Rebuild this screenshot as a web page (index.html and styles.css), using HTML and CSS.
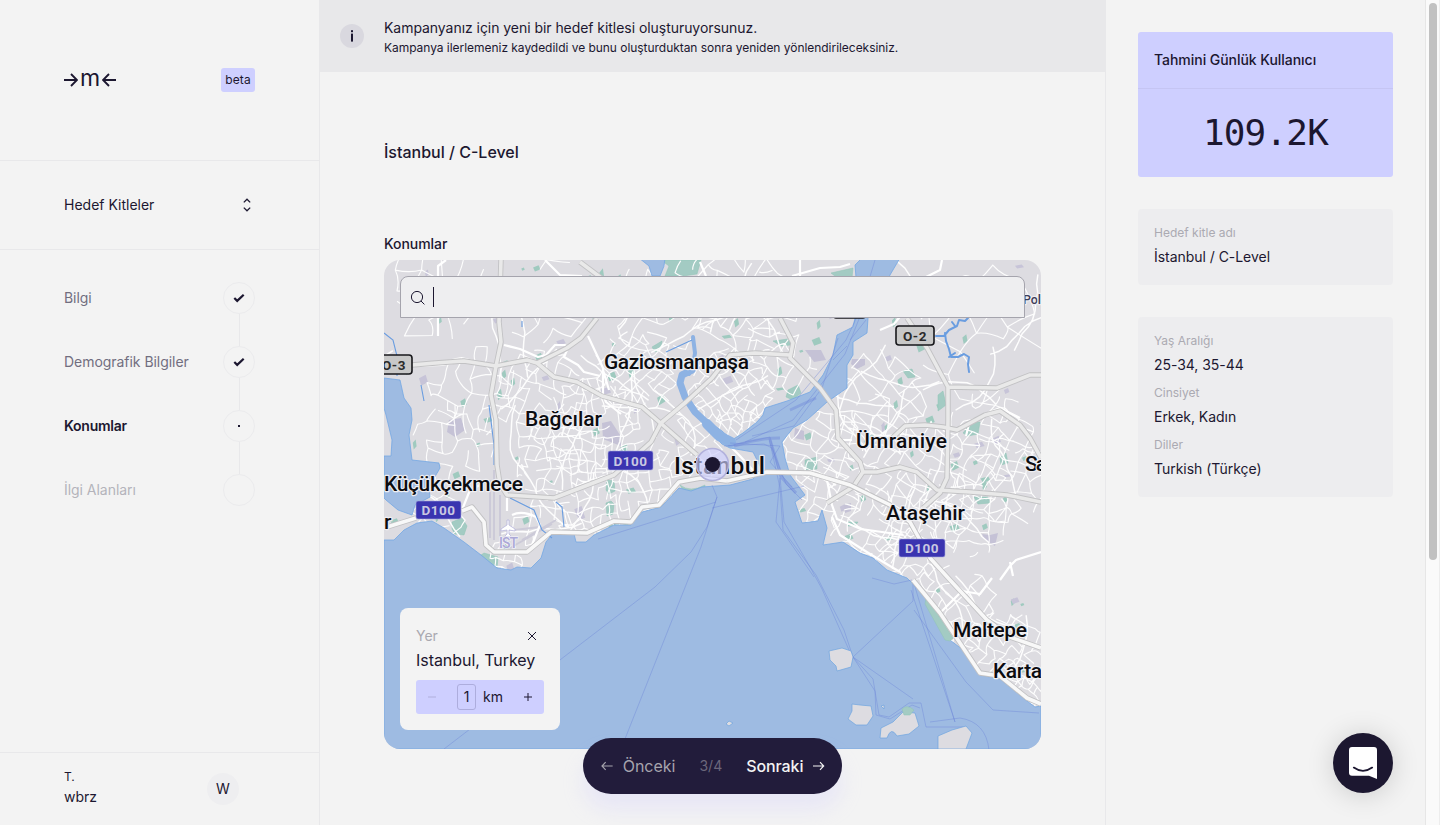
FILE: index.html
```html
<!DOCTYPE html>
<html lang="tr">
<head>
<meta charset="utf-8">
<title>Hedef Kitleler</title>
<link rel="stylesheet" href="styles.css">
</head>
<body>
<div class="app">
  <aside class="sidebar">
    <div class="brand">
      <div class="logo">
        <svg width="14" height="14" viewBox="0 0 14 14"><path d="M0 7H13M7 1l6 6-6 6"/></svg>
        <span>m</span>
        <svg width="14" height="14" viewBox="0 0 14 14"><path d="M14 7H1M7 1L1 7l6 6"/></svg>
      </div>
      <span class="beta">beta</span>
    </div>
    <div class="switcher">
      <span>Hedef Kitleler</span>
      <svg width="16" height="16" viewBox="0 0 16 16"><path d="M4.800 5.400L8 2.200l3.200 3.200M4.800 10.600L8 13.800l3.200-3.200"/></svg>
    </div>
    <ol class="steps">
      <li class="step done"><span>Bilgi</span><i><svg width="12" height="10" viewBox="0 0 12 10"><path d="M1.300 5l2.900 2.900L10.700 1.700"/></svg></i></li>
      <li class="step done"><span>Demografik Bilgiler</span><i><svg width="12" height="10" viewBox="0 0 12 10"><path d="M1.300 5l2.900 2.900L10.700 1.700"/></svg></i></li>
      <li class="step current"><span>Konumlar</span><i><b></b></i></li>
      <li class="step todo"><span>İlgi Alanları</span><i></i></li>
    </ol>
    <div class="user">
      <div class="user-name"><small>T.</small><span>wbrz</span></div>
      <span class="avatar">W</span>
    </div>
  </aside>

  <main class="content">
    <div class="notice">
      <span class="info"><svg width="6" height="14" viewBox="0 0 6 14"><rect x="2" y="1.200" width="2" height="2"/><rect x="2" y="4.600" width="2" height="8"/></svg></span>
      <div class="notice-text">
        <p>Kampanyanız için yeni bir hedef kitlesi oluşturuyorsunuz.</p>
        <small>Kampanya ilerlemeniz kaydedildi ve bunu oluşturduktan sonra yeniden yönlendirileceksiniz.</small>
      </div>
    </div>
    <div class="form">
      <h1>İstanbul / C-Level</h1>
      <h2>Konumlar</h2>
      <div class="map">
        <svg class="map-canvas" width="657" height="489" viewBox="384 260 657 489">
          <rect class="land" x="384" y="260" width="657" height="489"/>
          <g id="patches"></g>
          <g class="park">
            <path d="M661 260h40l-4 14-14 2h-18l4-10z"/>
            <path d="M452 522l10-4 5 8-3 9-9-1-3-5z"/>
            <path d="M607 480l7 1 1 10-6 3-3-4z"/><path d="M606 503l5-2 3 3-1 10-6 2z"/>
            <path d="M680 485q10 8 25 0v6q-12 6-22-1z"/>
            <path d="M478 557l6-4 14 4-1 12-10-5z"/>
            <path d="M652 347l10-6-1 8-6 3z"/>
            <path d="M788 390l10-5 3 8-8 7-7-3z"/><path d="M831 273l22-5-1 10-12 2z"/>
            <path d="M963 433l8-10 9-1-2 12-10 2z"/><path d="M1000 458l6-5 2 10-7 2z"/>
            <path d="M938 395l5-4 3 14-8 6z"/><path d="M974 497l14 0 2 6-12 1z"/>
            <path d="M773 341l15-2 3 6-10 1z"/><path d="M805 460l12-3 0 12-12 1z"/>
            <path d="M903 371l9-2 3 8-7 1z"/><path d="M848 522l10 0-3 4-7 0z"/>
          </g>
          <g class="built">
            <path d="M449 420l12-2 4 12-10 7-8-5z"/><path d="M602 423l9-2 9 14 1 11-18-7z"/>
            <path d="M852 359l13 0 0 6-8 4-6-5z"/><path d="M805 350l16 0 5 10-12 2z"/>
            <path d="M982 534l8 1 8-2-3 13-10-6z"/><path d="M844 505l7-2 0 8-6 2z"/>
            <path d="M795 428l9 3v9l-10-2z"/>
          </g>
          <g id="streets"></g>
          <g class="runway"><path d="M490 480v58M494 470v70M500 495v42M522 540l34-20M510 548l42-24M514 530l26-3"/></g>
          <g class="minor-road">
            <path d="M504 345l16 4 18 8 8-2 9-10h10l2 5-3 7 14 8 6 7 16 4"/>
            <path d="M588 336l15 32 0 26 3 8 15 12M603 370l6 20"/>
            <path d="M438 336v-70l8-6M545 260l15 15 22 1M800 260v16M792 276l28-8 20-1 10-3M942 260l-2 10-14 7"/>
            <path d="M700 262l6 14M880 330l14-6 8-10"/>
            <path d="M464 361l-22 4-25 1M462 510l8-20 12-6"/>
            <path d="M838 440h14M970 420l-4 16M990 412l10-4 20 10"/>
            <path d="M1000 580l10-14 6-6 25-8M1010 562l3 14"/>
            <path d="M507 495l0 16M512 515q10-5 24 2l4 8-8 20"/>
            <path d="M832 517l8 18 30 19 30 18M826 475l6 30 5 14 24 10 42 6M940 613l14-14 8-8 18 3 12-16M760 478l-20-22-28-28"/>
          </g>
          <g class="water">
            <path d="M384 378L400 380 404 398 411 408 412 420 409 435 412 460 439 463 440 468 429 487 430 497 415 505 412 515 398 510 386 500 384 498V456L391 456 392 440 386 415 384 408z"/>
            <path d="M384 540L394 540 404 530 417 523 432 521 444 528 464 542 481 555 497 568 511 570 517 567 531 568 541 558 546 542 554 532 574 534 576 542 586 542 594 535 614 525 631 525 642 512 661 507 679 488 691 491 702 487 730 485 753 479 762 470 753 452 730 448 722 444 708 430 712 424 722 431 732 440 743 433 757 422 763 415 765 408 787 401 810 392 823 375 833 355 837 335 853 327 855 318 857 290 855 265 862 258H900L890 275 880 295 868 318 867 333 853 342 853 355 847 365 847 388 827 402 807 420 793 428 782 442 785 458 790 475 805 495 795 502 802 523 818 521 822 510 827 528 823 545 843 542 860 553 873 558 887 570 907 578 913 584 927 600 950 640 963 650 980 675 1000 679 1027 701 1035 707 1041 706V749H384z"/>
            <path d="M639 258h26l-1 8-4 10h-8l-3-10z"/>
          </g>
          <g class="horn">
            <path stroke-width="4" d="M693 337l2 16-2 12-4 9"/>
            <path stroke-width="7" d="M692 370l-10 5-2 8 5 14 10 15 14 13"/>
            <path stroke-width="10" d="M707 424l12 12 12 6"/>
          </g>
          <g class="stream">
            <path d="M384 333l9 7 4 16v20M489 405l5 40 0 20M510 498l24 12 8 20 10 8M522 321v6M556 502l6 5 2 20M666 352l26-12M421 385l3 16"/>
            <path class="lake" d="M936 336l8 0 5-6 8-4 2-6 6 1 3-3M945 333l1 8 3 8 2 8 7 0 6-3 5 3-1 7 1 8M949 357l6-4M955 326l-3-4"/>
          </g>
          <g class="ferry">
            <path d="M717 497l-16 50L621 749M712 485l5 12-10 30-16 25-36 35L444 749M598 539l118-37M712 508l92-22M724 446l40-2 8 4 14 36 16 16"/>
            <path d="M728 446l42-9 10 40 4 45 26 45 12 22 31 70M769 438l11 50 3 42 33 45 28 55 9 27M780 478l-4 44 38 55M730 443l50 3-10 16 22 25M736 440l60-40 50-60 14-30 15-50M745 442l48-22 52-66 24-60M752 436l42-10 28-38 16-50M850 340l16-20M833 360l14-14"/>
            <path d="M853 657l20 22 6 36 10 2 20-14 12 0 5 24 40 0M853 657l60 42M853 657l60-56 0-21 42 142M911 590l44 132M914 610l52 72 27 28 46 3M853 657l22 34 1 24 14 4 22-14 8 3M872 578l22 6 18-4M930 722l30-4q26 4 29 32"/>
            <path stroke-width="3" d="M734 446q24-8 46-8M770 440l12 38 14 15M790 410l26-12"/>
          </g>
          <g class="island">
            <path d="M829 651l13-3 9 3 2 6-2 10-14 4-1-5-6-6z"/>
            <path d="M852 704l8 1 11 1 2 10-6 9-11 0-8-6 4-8z"/>
            <path d="M881 728l12-6 10-10 12 1 4 13-10 8-12 2q-6-10-10 2l-7 0z"/>
            <path d="M938 749v-13l14-6 14-4 6 7-6 16z"/>
            <path d="M726 724l3-3 4 2-4 3zM881 706l3-1v4z"/>
            <path d="M902 709q5-5 12 1l-4 5h-6z" class="park"/>
          </g>
          <path class="park" d="M926 598l9 12 18 28-3 3-5-1-20-36z"/>
          <g class="highway">
            <path d="M412 365C440 362 450 362 464 361L496 366 527 360 537 363 554 377 577 382 602 396 642 407 657 420 697 455"/>
            <path d="M501 260L499 322 501 342 496 366 491 395 496 420 497 465 500 484 507 495 554 498 614 475 651 442 661 423 686 402 712 378 730 355 755 353 790 355"/>
            <path d="M537 363L567 348 581 338 597 318M580 262l24 18"/>
            <path d="M780 318L793 343 790 358 820 388 836 410 838 438 860 462 863 472 853 487 827 503"/>
            <path d="M863 472L877 472 900 467 917 472 937 490 970 492 1007 495 1041 502"/>
            <path d="M907 318L927 348 948 387 997 388 1030 375 1041 375M948 387V420L947 478 940 493 923 508"/>
            <path d="M890 440L905 426 925 425 943 427 957 430 985 415 1000 411 1020 425 1030 438 1041 458"/>
          </g>
          <g class="highway bright">
            <path d="M727 481L767 472 810 473 850 485 890 505 910 522 930 558 950 580 987 620 1010 637 1041 648"/>
            <path d="M384 528L416 518M462 511L472 507 484 522 486 545 494 552 527 552 551 532 587 533 614 521 631 522 642 507 659 505 679 482 701 478 727 481"/>
            <path d="M913 580L940 613 980 673 1000 676 1027 698 1041 704"/>
          </g>
          <g class="airport"><path d="M507 520h2v5l6 4v2l-6-1v4l2 2v1h-6v-1l2-2v-4l-6 1v-2l6-4z"/><text x="499" y="548" textLength="19">IST</text></g>
          <g class="place">
            <text x="604" y="369" textLength="145">Gaziosmanpaşa</text>
            <text x="525" y="426" textLength="77">Bağcılar</text>
            <text x="856" y="448" textLength="91">Ümraniye</text>
            <text x="384" y="491" textLength="139">Küçükçekmece</text>
            <text x="886" y="520" textLength="79">Ataşehir</text>
            <text x="953" y="637" textLength="74">Maltepe</text>
            <text x="993" y="678" textLength="49">Karta</text>
            <text x="1025" y="471" textLength="22">Sa</text>
            <text x="384" y="529">r</text>
            <text class="city" x="674" y="474" textLength="91">Istanbul</text>
            <text class="village" x="1023" y="304" textLength="18">Pol</text>
          </g>
          <g class="shield">
            <rect x="370" y="355" width="42" height="19" rx="3"/><text x="394" y="369.500">O-3</text>
            <rect x="896" y="326" width="38" height="19" rx="3"/><text x="915" y="340.500">O-2</text>
            <rect x="834" y="300" width="31" height="18" rx="2"/>
          </g>
          <g class="shield blue">
            <rect x="608" y="451" width="45" height="19" rx="2"/><text x="630.500" y="465.500">D100</text>
            <rect x="416" y="501" width="45" height="18" rx="2"/><text x="438.500" y="515">D100</text>
            <rect x="899" y="539" width="46" height="18" rx="2"/><text x="922" y="553">D100</text>
          </g>
          <circle class="radius" cx="712.500" cy="464.500" r="16"/><circle class="pin" cx="712.500" cy="464.500" r="7.500"/>
        </svg>
        <div class="search">
          <svg width="16" height="16" viewBox="0 0 16 16"><circle cx="7" cy="7" r="5.600"/><path d="M11 11l3.400 3.400"/></svg>
          <span class="caret"></span>
        </div>
        <div class="place-card">
          <div class="card-head"><span>Yer</span><svg width="8" height="8" viewBox="0 0 8 8"><path d="M0 0l8 8M8 0L0 8"/></svg></div>
          <strong>Istanbul, Turkey</strong>
          <div class="distance">
            <svg class="off" width="8" height="8" viewBox="0 0 8 8"><path d="M0 4h8"/></svg>
            <span class="value"><b>1</b>km</span>
            <svg width="8" height="8" viewBox="0 0 8 8"><path d="M0 4h8M4 0v8"/></svg>
          </div>
        </div>
      </div>
    </div>
    <nav class="pager">
      <svg width="12" height="10" viewBox="0 0 12 10"><path d="M12 5H1M4.800 1L1 5l3.800 4"/></svg>
      <span class="prev">Önceki</span>
      <span class="count">3/4</span>
      <span class="next">Sonraki</span>
      <svg class="on" width="12" height="10" viewBox="0 0 12 10"><path d="M0 5h11M7.200 1L11 5 7.200 9"/></svg>
    </nav>
  </main>

  <aside class="summary">
    <section class="estimate">
      <h3>Tahmini Günlük Kullanıcı</h3>
      <p>109.2K</p>
    </section>
    <dl class="facts"><dt>Hedef kitle adı</dt><dd>İstanbul / C-Level</dd></dl>
    <dl class="facts">
      <dt>Yaş Aralığı</dt><dd>25-34, 35-44</dd>
      <dt>Cinsiyet</dt><dd>Erkek, Kadın</dd>
      <dt>Diller</dt><dd>Turkish (Türkçe)</dd>
    </dl>
    <button class="chat" aria-label="chat">
      <svg width="28" height="32" viewBox="0 0 28 32"><path fill="#fff" d="M3 0h22a3 3 0 0 1 3 3v29l-8-3.200H3a3 3 0 0 1-3-3V3a3 3 0 0 1 3-3z"/><path fill="none" stroke="#1c1730" stroke-width="1.800" stroke-linecap="round" d="M4.800 20.600q9.200 6.600 18.400 0"/></svg>
    </button>
  </aside>
  <div class="scrollbar"><span></span></div>
</div>
<script src="map.js"></script>
</body>
</html>
```
FILE: styles.css
```css
* { box-sizing: border-box; margin: 0; padding: 0; }
body { font: 14px/20px Inter, "Liberation Sans", sans-serif; color: #1c1730; background: #f3f3f3; overflow: hidden; }
svg { display: block; fill: none; stroke: #1c1730; }
.app { display: flex; height: 825px; width: 1440px; }

.sidebar { width: 320px; border-right: 1px solid #e8e8ea; display: flex; flex-direction: column; flex: none; }
.brand { height: 161px; border-bottom: 1px solid #e8e8ea; padding: 0 64px; display: flex; justify-content: space-between; align-items: center; }
.logo { display: flex; align-items: center; height: 22px; gap: 2px; }
.logo svg { stroke-width: 1.9; }
.logo span { font-size: 23px; line-height: 20px; width: 20px; margin-top: -5px; display: flex; justify-content: center; }
.beta { background: #cecfff; border-radius: 3px; width: 34px; height: 24px; line-height: 24px; font-size: 12px; text-align: center; letter-spacing: .1px; }
.switcher { height: 89px; border-bottom: 1px solid #e8e8ea; padding: 0 64px; display: flex; justify-content: space-between; align-items: center; }
.switcher svg { stroke-width: 1.3; }
.steps { list-style: none; padding: 32px 64px 0; flex: 1; display: flex; flex-direction: column; gap: 32px; }
.step { display: flex; justify-content: space-between; align-items: center; height: 32px; letter-spacing: -.04px; }
.step i { width: 32px; height: 32px; border: 1px solid #ebebed; border-radius: 50%; display: flex; align-items: center; justify-content: center; position: relative; }
.step + .step i::before { content: ""; position: absolute; left: 15px; bottom: 31px; width: 1px; height: 32px; background: #e8e8ea; }
.step svg { stroke-width: 2.2; }
.step b { width: 2px; height: 2px; background: #1c1730; }
.done span { color: #716e7f; }
.current span { font-weight: 600; letter-spacing: -.25px; }
.todo span { color: #b4b3bb; }
.user { height: 73px; border-top: 1px solid #e8e8ea; padding: 0 80px 0 64px; display: flex; align-items: center; justify-content: space-between; }
.user-name { display: flex; flex-direction: column; padding-bottom: 4px; }
.user-name small { font-size: 12px; }
.avatar { width: 32px; height: 32px; line-height: 32px; border-radius: 50%; background: #eeeef0; text-align: center; }

.content { width: 786px; border-right: 1px solid #e8e8ea; flex: none; position: relative; }
.notice { height: 72px; background: #e8e8ea; padding-left: 20px; display: flex; gap: 20px; align-items: center; }
.info { width: 24px; height: 24px; border-radius: 50%; background: #d9d8df; display: flex; align-items: center; justify-content: center; }
.info svg { fill: #1c1730; stroke: none; }
.notice-text { padding-top: 3px; letter-spacing: -.05px; }
.notice-text small { display: block; font-size: 12px; line-height: 19px; letter-spacing: -.04px; }
.form { padding: 68px 64px 0; }
h1 { font-size: 16px; line-height: 24px; font-weight: 500; }
h2 { font-size: 14px; line-height: 20px; font-weight: 500; margin: 70px 0 6px; letter-spacing: -.05px; }
.map { width: 657px; height: 489px; border-radius: 16px; overflow: hidden; position: relative; }
.search { position: absolute; left: 16px; top: 16px; width: 625px; height: 42px; background: #eeeef0; border: 1px solid #a5a4ad; border-radius: 8px 8px 0 0; display: flex; align-items: center; padding-left: 9px; gap: 7px; }
.search svg { margin-top: 2px; }
.caret { width: 1px; height: 20px; background: #1c1730; }
.place-card { position: absolute; left: 16px; top: 348px; width: 160px; height: 122px; background: #f3f3f3; border-radius: 8px; padding: 18px 16px 16px; display: flex; flex-direction: column; }
.card-head { display: flex; justify-content: space-between; align-items: center; color: #a9a8b0; padding-right: 8px; }
.place-card strong { font-size: 16px; line-height: 24px; font-weight: 400; margin: 2px 0 8px; white-space: nowrap; letter-spacing: -.05px; }
.distance { height: 34px; background: #cecfff; border-radius: 3px; padding: 0 12px; display: flex; align-items: center; justify-content: space-between; }
.distance .off { opacity: .16; }
.value { display: flex; align-items: center; gap: 7px; }
.value b { font-weight: 400; width: 19px; height: 26px; line-height: 24px; border: 1px solid #adaddd; border-radius: 3px; text-align: center; }

.land { fill: #dddce1; stroke: none; }
.park, .island path.park { fill: #a3cbc3; stroke: #8fc5b5; stroke-width: .5; }
.built { fill: #c5c2d6; stroke: none; }
.runway { stroke: #cccad8; stroke-width: 2; }
.streets { stroke: #fdfdfd; stroke-linecap: round; }
.minor-road { stroke: #fff; stroke-width: 2.2; stroke-linejoin: round; }
.water { fill: #9ebbe2; stroke: #74a7e3; stroke-width: .8; stroke-linejoin: round; }
.horn { stroke: #8db2e3; stroke-linejoin: round; stroke-linecap: round; }
.stream { stroke: #6a9de0; stroke-width: 1.1; }
.stream .lake { stroke-width: 2; stroke-linejoin: round; stroke-linecap: round; }
.ferry { stroke: #6a82d8; stroke-opacity: .38; stroke-width: 1; }
.island path { fill: #dddce1; stroke: #6fa5e0; stroke-width: .7; }
.highway path { stroke: #e9e9e9; stroke-width: 3.6; stroke-linejoin: round; }
.highway .casing { stroke: #c2c2c4; stroke-width: 5.4; }
.bright path { stroke: #f8f8f8; }
.place text { font: 500 21px Roboto, "Noto Sans", sans-serif; fill: #0c0c10; stroke: #eeeef2; stroke-width: 2.4; paint-order: stroke; stroke-linejoin: round; }
.place .city { font-size: 24.5px; }
.place .village { font-size: 12.5px; fill: #3e3c58; }
.airport path { fill: #fff; stroke: #b8b5dc; stroke-width: .8; }
.airport text { font: 500 14px Roboto, sans-serif; fill: #aba8d6; stroke: #efeef6; stroke-width: 1.5; paint-order: stroke; }
.shield rect { fill: #c8c8c8; stroke: #17171b; stroke-width: 1.6; }
.shield text { font: 700 13.5px Roboto, sans-serif; fill: #2b2b2b; stroke: none; text-anchor: middle; letter-spacing: .5px; }
.blue rect { fill: #3a34b0; stroke: #a6a8de; stroke-width: .6; }
.blue text { fill: #c9c8e2; }
.radius { fill: #cecfff; fill-opacity: .65; stroke: #b2b1dc; stroke-width: 1.6; }
.pin { fill: #1c1730; stroke: none; }

.pager { position: absolute; left: 263px; top: 738px; width: 259px; height: 56px; border-radius: 28px; background: #221c3b; box-shadow: 0 16px 20px rgba(206, 200, 255, .28); display: flex; align-items: center; padding: 0 17px 0 18px; font-size: 16px; color: #f3f3f3; }
.pager svg { stroke: #a6a4ad; stroke-width: 1.2; }
.pager svg.on { stroke: #f3f3f3; margin-left: 10px; }
.prev { color: #a6a4ad; margin-left: 10px; }
.count { color: #6b677b; font-size: 14px; margin: 0 24px; }
.next { font-weight: 500; letter-spacing: -.1px; }

.summary { width: 319px; padding: 32px; display: flex; flex-direction: column; gap: 32px; flex: none; position: relative; }
.estimate { height: 145px; background: #cecfff; border-radius: 3px; }
.estimate h3 { height: 57px; line-height: 56px; padding-left: 16px; font-size: 14px; font-weight: 500; border-bottom: 1px solid #c5c5f3; letter-spacing: -.04px; }
.estimate p { font: 36px/88px "DejaVu Sans Mono", monospace; letter-spacing: -.8px; text-align: center; }
.facts { background: #ededef; border-radius: 4px; padding: 14px 16px; display: flex; flex-direction: column; }
.facts dt { font-size: 12px; line-height: 20px; color: #abaab2; }
.facts dd { line-height: 20px; margin: 4px 0 8px; letter-spacing: -.04px; }
.facts dd:last-child { margin-bottom: 4px; }
.chat { position: absolute; left: 227px; top: 733px; width: 60px; height: 60px; border: 0; border-radius: 50%; background: #1c1730; display: flex; align-items: center; justify-content: center; box-shadow: 0 2px 28px rgba(0, 0, 0, .16); }
.chat svg { stroke: none; }
.scrollbar { width: 15px; background: #fafafa; border-left: 1px solid #e6e6e6; border-right: 1px solid #ededed; padding: 3px 2px 0 3px; }
.scrollbar span { display: block; width: 8px; height: 557px; border-radius: 4px; background: #c1c1c1; }
```
FILE: map.js
```js
// Side streets, small green patches and road casings for the city map.
(function () {
  var NS = 'http://www.w3.org/2000/svg';
  var seed = 71;
  function rnd() { seed = (seed * 16807) % 2147483647; return seed / 2147483647; }
  function add(parent, d, attrs) {
    var p = document.createElementNS(NS, 'path');
    p.setAttribute('d', d);
    for (var k in attrs) p.setAttribute(k, attrs[k]);
    parent.appendChild(p);
    return p;
  }
  // centre x, centre y, radius, rotation, cell size
  var districts = [
    [435, 295, 55, 0.2, 20], [470, 390, 50, 0.15, 14], [545, 300, 50, 0.5, 20], [540, 395, 50, 0.3, 11],
    [590, 430, 55, -0.2, 10], [560, 460, 50, 0.1, 11], [635, 375, 45, 0.7, 9], [660, 310, 55, 0.4, 14],
    [640, 480, 40, 0.0, 10], [690, 450, 35, 0.8, 10], [590, 510, 35, -0.15, 10], [540, 520, 30, 0.2, 13],
    [455, 440, 45, 0.1, 13], [440, 515, 30, 0.6, 11], [505, 560, 20, 0.2, 8], [740, 300, 60, 0.5, 15],
    [730, 390, 45, 0.9, 9], [740, 425, 28, 0.4, 8], [780, 360, 38, 0.3, 13], [770, 300, 40, 0.1, 16],
    [880, 395, 50, 0.8, 14], [820, 450, 45, 0.4, 13], [870, 430, 40, 0.2, 16], [915, 465, 55, 0.6, 14],
    [990, 440, 50, 0.4, 11], [1005, 480, 50, 0.5, 13], [830, 490, 40, 0.4, 10], [870, 530, 45, 0.5, 11],
    [930, 510, 50, 0.4, 13], [970, 520, 40, 0.05, 11], [910, 555, 35, 0.8, 10], [980, 330, 75, 0.7, 28],
    [950, 610, 50, 0.8, 11], [1005, 655, 45, 0.6, 9], [1015, 690, 32, 0.7, 9]
  ];
  var d = '';
  districts.forEach(function (t) {
    var s = t[4], n = Math.ceil(t[2] / s), pts = {}, i, j;
    var c = Math.cos(t[3]), q = Math.sin(t[3]);
    for (i = -n; i <= n; i++) for (j = -n; j <= n; j++) {
      var u = i * s + (rnd() - 0.5) * s * 0.7, v = j * s + (rnd() - 0.5) * s * 0.7;
      if (u * u + v * v < t[2] * t[2]) pts[i + ',' + j] = [t[0] + u * c - v * q, t[1] + u * q + v * c];
    }
    function link(a, b) {
      if (!a || !b || rnd() < 0.3) return;
      var mx = (a[0] + b[0]) / 2 + (rnd() - 0.5) * s * 0.4, my = (a[1] + b[1]) / 2 + (rnd() - 0.5) * s * 0.4;
      d += 'M' + a[0].toFixed(1) + ' ' + a[1].toFixed(1) + 'Q' + mx.toFixed(1) + ' ' + my.toFixed(1) + ' ' + b[0].toFixed(1) + ' ' + b[1].toFixed(1);
    }
    for (i = -n; i <= n; i++) for (j = -n; j <= n; j++) {
      link(pts[i + ',' + j], pts[(i + 1) + ',' + j]);
      link(pts[i + ',' + j], pts[i + ',' + (j + 1)]);
    }
  });
  var streets = document.getElementById('streets');
  streets.setAttribute('class', 'streets');
  add(streets, d, { 'stroke-width': 1.15 });

  // collector roads wander across several districts
  var long = '';
  for (var k = 0; k < 60; k++) {
    var x = 384 + rnd() * 657, y = 262 + rnd() * 420, a = rnd() * 6.28;
    long += 'M' + x.toFixed(1) + ' ' + y.toFixed(1);
    for (var m = 0; m < 9; m++) {
      a += (rnd() - 0.5) * 0.7;
      x += Math.cos(a) * 9; y += Math.sin(a) * 9;
      long += 'L' + x.toFixed(1) + ' ' + y.toFixed(1);
    }
  }
  add(streets, long, { 'stroke-width': 1.5, 'stroke-linejoin': 'round' });

  var patches = document.getElementById('patches');
  for (k = 0; k < 190; k++) {
    var px = 384 + rnd() * 657, py = 262 + rnd() * 420, w = 2 + rnd() * 6, h = 2 + rnd() * 6;
    add(patches, 'M' + px + ' ' + py + 'l' + w + ' ' + (-h / 2) + 'l' + (w / 3) + ' ' + h + 'l' + (-w) + ' ' + (h / 2) + 'z',
      { fill: k % 4 ? '#9fcabf' : '#c7c4d8', stroke: 'none' });
  }

  document.querySelectorAll('.highway').forEach(function (g) {
    Array.prototype.slice.call(g.querySelectorAll('path')).reverse().forEach(function (p) {
      var copy = p.cloneNode();
      copy.setAttribute('class', 'casing');
      g.insertBefore(copy, g.firstChild);
    });
  });
})();
```
